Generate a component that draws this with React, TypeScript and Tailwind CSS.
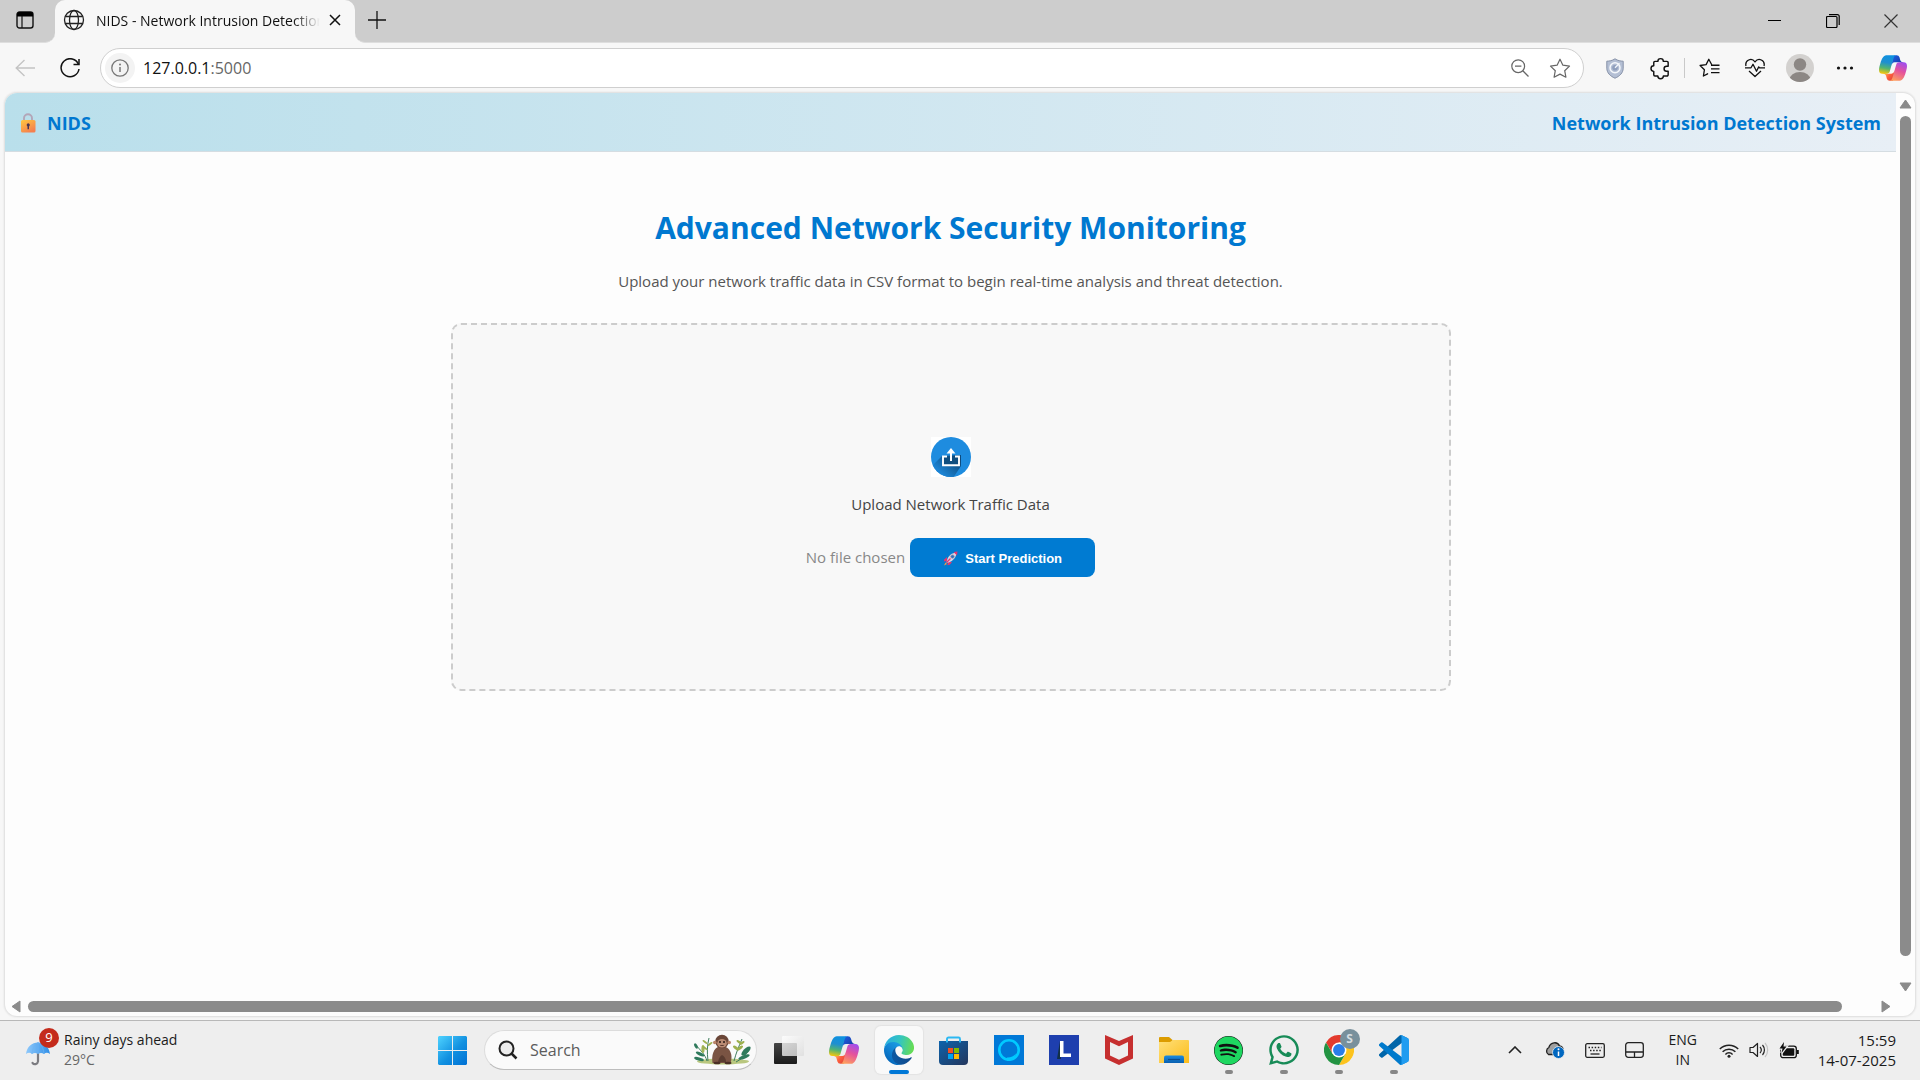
import React, { useState } from "react";
import { FaSpotify, FaWhatsapp } from "react-icons/fa";

function Svg({ w, h, box, children }: { w: number; h: number; box?: string; children: React.ReactNode }) {
  return (
    <svg width={w} height={h} viewBox={box ?? `0 0 ${w} ${h}`} fill="none" aria-hidden="true" className="shrink-0">
      {children}
    </svg>
  );
}

function CopilotLogo({ id, size }: { id: string; size: number }) {
  return (
    <Svg w={size} h={size} box="0 -1 24 24">
      <defs>
        <linearGradient id={id + "a"} x1="12" y1="0" x2="19" y2="6" gradientUnits="userSpaceOnUse">
          <stop stopColor="#1b5fe0" /><stop offset="1" stopColor="#1a3fae" />
        </linearGradient>
        <linearGradient id={id + "b"} x1="5" y1="15" x2="12" y2="21" gradientUnits="userSpaceOnUse">
          <stop stopColor="#ffb657" /><stop offset="0.5" stopColor="#ff5f3d" /><stop offset="1" stopColor="#e0453a" />
        </linearGradient>
        <linearGradient id={id + "c"} x1="8" y1="0" x2="5" y2="16" gradientUnits="userSpaceOnUse">
          <stop stopColor="#0d91e1" /><stop offset="0.4" stopColor="#1f8fd0" /><stop offset="0.7" stopColor="#52b471" /><stop offset="1" stopColor="#f5c70c" />
        </linearGradient>
        <linearGradient id={id + "d"} x1="20" y1="6" x2="13" y2="22" gradientUnits="userSpaceOnUse">
          <stop stopColor="#a04dee" /><stop offset="0.45" stopColor="#e5529c" /><stop offset="1" stopColor="#ffa15c" />
        </linearGradient>
      </defs>
      <path fill={`url(#${id}a)`} d="M17.533 1.829A2.528 2.528 0 0015.11 0h-.737a2.531 2.531 0 00-2.484 2.087l-1.263 6.937.314-1.08a2.528 2.528 0 012.424-1.833h4.284l1.797.706 1.731-.706h-.505a2.528 2.528 0 01-2.423-1.829l-.715-2.453z" />
      <path fill={`url(#${id}b)`} d="M6.726 20.16A2.528 2.528 0 009.152 22h1.566c1.37 0 2.49-1.1 2.525-2.48l.17-6.69-.357 1.228a2.528 2.528 0 01-2.423 1.83h-4.32l-1.54-.842-1.667.843h.497c1.124 0 2.113.75 2.426 1.84l.697 2.432z" />
      <path fill={`url(#${id}c)`} d="M15 0H6.252c-2.5 0-4 3.331-5 6.662-1.184 3.947-2.734 9.225 1.75 9.225H6.78c1.13 0 2.12-.753 2.43-1.847.657-2.317 1.809-6.359 2.713-9.436.46-1.563.842-2.906 1.43-3.742A1.97 1.97 0 0115 0" />
      <path fill={`url(#${id}d)`} d="M9 22h8.749c2.5 0 4-3.332 5-6.663 1.184-3.948 2.734-9.227-1.75-9.227h-3.777c-1.13 0-2.12.754-2.43 1.848-.657 2.318-1.809 6.362-2.713 9.44-.46 1.563-.842 2.907-1.43 3.743A1.97 1.97 0 019 22" />
    </Svg>
  );
}

function IconButton({ label, className, children }: { label: string; className: string; children: React.ReactNode }) {
  return (
    <button type="button" aria-label={label} className={"flex shrink-0 items-center justify-center " + className}>
      {children}
    </button>
  );
}

function TabStrip() {
  return (
    <div className="flex h-[43px] shrink-0 bg-[#f7f7f7]">
      <div className="flex w-[55px] shrink-0 items-start rounded-br-[10px] border-b border-[#dedede] bg-[#cdcdcd]">
        <IconButton label="Tab actions" className="h-10 w-[50px]">
          <Svg w={18} h={18}>
            <rect x="1" y="1" width="16" height="16" rx="2.5" stroke="#111" strokeWidth="1.4" />
            <path d="M1 5.5V3.5A2.5 2.5 0 0 1 3.500 1h11A2.500 2.500 0 0 1 17 3.500v2z" fill="#000" />
            <path d="M6 5v12" stroke="#111" strokeWidth="1.2" />
          </Svg>
        </IconButton>
      </div>
      <div className="w-[300px] shrink-0 bg-[#cdcdcd]">
        <div className="flex h-full items-start rounded-t-[10px] bg-[#f7f7f7]">
          <div className="flex h-10 w-full items-center justify-between pr-2 pl-2">
            <Svg w={22} h={22}>
              <g stroke="#222" strokeWidth="1.3">
                <circle cx="11" cy="11" r="9.500" />
                <ellipse cx="11" cy="11" rx="4.500" ry="9.500" />
                <path d="M2.200 7.500h17.600M2.200 14.500h17.600" />
              </g>
            </Svg>
            <span className="ml-[11px] min-w-0 flex-1 overflow-hidden text-[14px] whitespace-nowrap text-[#111] [mask-image:linear-gradient(to_right,#000_88%,transparent)]">
              NIDS - Network Intrusion Detection System
            </span>
            <IconButton label="Close tab" className="ml-[3px] size-6">
              <Svg w={12} h={12}><path d="M1 1l10 10M11 1L1 11" stroke="#111" strokeWidth="1.500" /></Svg>
            </IconButton>
          </div>
        </div>
      </div>
      <div className="flex flex-1 items-start rounded-bl-[10px] border-b border-[#dedede] bg-[#cdcdcd]">
        <IconButton label="New tab" className="h-10 w-[44px]">
          <Svg w={18} h={18}><path d="M9 0v18M0 9h18" stroke="#111" strokeWidth="1.300" /></Svg>
        </IconButton>
        <div className="ml-auto flex">
          <IconButton label="Minimize" className="h-[42px] w-[58px]">
            <Svg w={14} h={14}><path d="M0 6.500h13" stroke="#000" /></Svg>
          </IconButton>
          <IconButton label="Restore" className="h-[42px] w-[58px]">
            <Svg w={14} h={14}>
              <rect x="0.500" y="2.500" width="10.500" height="11" rx="1" stroke="#000" strokeWidth="1.200" />
              <path d="M3 .6h8.500a1.700 1.700 0 0 1 1.700 1.700V11" stroke="#000" strokeWidth="1.200" />
            </Svg>
          </IconButton>
          <IconButton label="Close" className="h-[42px] w-[58px]">
            <Svg w={14} h={14}><path d="M.5.5l13 13M13.500.5l-13 13" stroke="#333" strokeWidth="1.200" /></Svg>
          </IconButton>
        </div>
      </div>
    </div>
  );
}

function AddressBar() {
  const [url, setUrl] = useState("127.0.0.1:5000");
  return (
    <div className="flex h-[50px] shrink-0 items-center bg-[#f7f7f7] pr-[5px]">
      <IconButton label="Back" className="h-10 w-[50px]">
        <Svg w={20} h={18}><path d="M9.500 1L1.200 9l8.300 8M1.200 9H20" stroke="#c4c4c4" strokeWidth="1.400" /></Svg>
      </IconButton>
      <IconButton label="Refresh" className="h-10 w-10">
        <Svg w={20} h={20}>
          <path d="M18.500 6.500A9 9 0 1 0 19 11" stroke="#111" strokeWidth="1.500" />
          <path d="M19 1v5.500h-5.500" stroke="#111" strokeWidth="1.500" />
        </Svg>
      </IconButton>
      <div className="ml-[10px] flex h-10 flex-1 items-center rounded-full border border-[#cfcfcf] bg-white pr-[3px] pl-1">
        <IconButton label="Site information" className="size-[30px] rounded-full bg-[#f3f3f3]">
          <Svg w={18} h={18}>
            <circle cx="9" cy="9" r="8.200" stroke="#777" strokeWidth="1.300" />
            <path d="M9 8v5" stroke="#777" strokeWidth="1.500" /><circle cx="9" cy="5.500" r="1" fill="#777" />
          </Svg>
        </IconButton>
        <div className="relative ml-2 h-6 flex-1 text-[16px] leading-6">
          <input
            aria-label="Address"
            value={url}
            onChange={(e) => setUrl(e.target.value)}
            className="h-6 w-full bg-transparent text-transparent caret-black outline-none"
          />
          <div aria-hidden="true" className="pointer-events-none absolute inset-0 text-[#111]">
            {url.split(":")[0]}<span className="text-[#666]">{url.includes(":") ? url.slice(url.indexOf(":")) : ""}</span>
          </div>
        </div>
        <IconButton label="Zoom out" className="size-10">
          <Svg w={18} h={18}>
            <circle cx="7.200" cy="7.200" r="6.400" stroke="#666" strokeWidth="1.200" />
            <path d="M4 7.200h6.400M11.800 11.800l5.700 5.700" stroke="#666" strokeWidth="1.300" />
          </Svg>
        </IconButton>
        <IconButton label="Add to favorites" className="size-10">
          <Svg w={22} h={21} box="0 0 22 21">
            <path d="M11 1.200l2.900 6 6.600.9-4.800 4.600 1.200 6.500L11 16.100l-5.900 3.100 1.200-6.500L1.500 8.100l6.600-.9z" stroke="#666" strokeWidth="1.200" strokeLinejoin="round" />
          </Svg>
        </IconButton>
      </div>
      <IconButton label="Tracking shield" className="ml-2 size-[45px]">
        <Svg w={18} h={21}>
          <path d="M9 .8c2.800 1.900 5.500 2.300 8.200 2.400v7c0 4.500-3.400 8-8.200 10-4.800-2-8.200-5.500-8.200-10v-7C3.500 3.100 6.200 2.700 9 .8z" fill="#b4bfd4" stroke="#8792a8" />
          <circle cx="9" cy="9.700" r="5" stroke="#f4f7fb" strokeWidth="1.500" />
          <circle cx="9" cy="9.700" r="2.800" fill="#8f9fbd" /><path d="M9 9.700l4.500-4.500" stroke="#f4f7fb" strokeWidth="1.300" />
        </Svg>
      </IconButton>
      <IconButton label="Extensions" className="size-[45px]">
        <Svg w={24} h={24} box="0 0 20 20">
          <path d="M4.800 8.200V5.500a1 1 0 0 1 1-1h2.400a2.300 2.300 0 0 1 4.600 0h3a1 1 0 0 1 1 1v3h-1.300a2.100 2.100 0 0 0 0 4.200h1.300v3a1 1 0 0 1-1 1h-3a2.300 2.300 0 0 1-4.600 0H5.800a1 1 0 0 1-1-1v-2.900a2.300 2.300 0 0 1 0-4.600z" stroke="#111" strokeWidth="1.200" strokeLinejoin="round" />
        </Svg>
      </IconButton>
      <div className="ml-[2px] h-5 w-px bg-[#c9c9c9]" />
      <IconButton label="Favorites" className="ml-[2px] size-[45px]">
        <Svg w={21} h={20}>
          <path d="M12.600 6.500L9.800 1.200 7.100 6.600l-6 .9 4.300 4.300-1 6.200 4.200-2.200" stroke="#111" strokeWidth="1.300" strokeLinejoin="round" strokeLinecap="round" />
          <path d="M12 7.200h8.500M12 10.900h8.500M12 14.600h8.500" stroke="#111" strokeWidth="1.400" />
        </Svg>
      </IconButton>
      <IconButton label="Browser essentials" className="size-[45px]">
        <Svg w={22} h={20}>
          <path d="M2 8C.6 2.200 7.500-.8 11 3.800 14.500-.8 21.400 2.200 20 8" stroke="#111" strokeWidth="1.300" />
          <path d="M1 9.800h6l2-3.600 3.500 7 2.200-4.300.8.900H21M5 13l6 5.500 6-5.500" stroke="#111" strokeWidth="1.300" strokeLinejoin="round" />
        </Svg>
      </IconButton>
      <IconButton label="Profile" className="size-[45px]">
        <Svg w={28} h={28}>
          <defs><clipPath id="avatar"><circle cx="14" cy="14" r="14" /></clipPath></defs>
          <g clipPath="url(#avatar)">
            <rect width="28" height="28" fill="#d3d1cf" />
            <circle cx="14" cy="10.500" r="6.200" fill="#8c8784" /><ellipse cx="14" cy="26" rx="10.500" ry="8" fill="#8c8784" />
          </g>
        </Svg>
      </IconButton>
      <IconButton label="Settings and more" className="size-[45px]">
        <Svg w={18} h={6}><g fill="#111"><circle cx="2.500" cy="3" r="1.600" /><circle cx="9" cy="3" r="1.600" /><circle cx="15.500" cy="3" r="1.600" /></g></Svg>
      </IconButton>
      <IconButton label="Copilot" className="ml-[3px] size-[45px]"><CopilotLogo id="tb" size={28} /></IconButton>
    </div>
  );
}

function PageHeader() {
  return (
    <header className="flex h-[59px] items-center justify-between border-b border-[#d5dde2] bg-linear-to-r from-[#b9dfeb] to-[#e8eff6] px-[15px] pt-[2px] text-[18px] font-bold text-[#0078d0]">
      <div className="flex items-center gap-[11px]">
        <Svg w={16} h={20}>
          <defs><linearGradient id="lock" x1="0" y1="0" x2="0.600" y2="1"><stop stopColor="#ffc83f" /><stop offset="1" stopColor="#f57f4f" /></linearGradient></defs>
          <path d="M4 9V5.200a4 4 0 0 1 8 0V9" stroke="#b3a6b8" strokeWidth="1.900" />
          <rect x="1" y="7" width="14.500" height="12.500" rx="1.500" fill="url(#lock)" />
          <path d="M8.200 10.200a1.800 1.800 0 0 1 .8 3.300v2.700H7.500v-2.700a1.800 1.800 0 0 1 .7-3.300z" fill="#4a3550" />
        </Svg>
        <span>NIDS</span>
      </div>
      <span>Network Intrusion Detection System</span>
    </header>
  );
}

function UploadPanel() {
  return (
    <form
      onSubmit={(e) => e.preventDefault()}
      className="mt-[30px] flex min-h-[368px] w-full max-w-[1000px] flex-col items-center justify-center rounded-[10px] border-2 border-dashed border-[#cccccc] bg-[#f8f8f8]"
    >
      <label htmlFor="traffic" className="flex cursor-pointer flex-col items-center gap-[15px] text-[15px] leading-6 text-[#444]">
        <span className="bg-white">
          <Svg w={40} h={40}>
            <defs>
              <clipPath id="disc"><circle cx="20" cy="20" r="20" /></clipPath>
              <linearGradient id="shade" x1="24" y1="20" x2="10" y2="36" gradientUnits="userSpaceOnUse"><stop stopColor="#0d4a7c" /><stop offset="1" stopColor="#1c84d4" /></linearGradient>
            </defs>
            <g clipPath="url(#disc)">
              <rect width="40" height="40" fill="#1e8cdf" />
              <path d="M11 19L-4 34l20 16 14-21V18z" fill="url(#shade)" />
            </g>
            <rect x="12.500" y="20" width="15" height="7.500" fill="#104f80" />
            <path d="M16 19.500h-4v8.800h16v-8.800h-4" stroke="#fff" strokeWidth="1.900" />
            <path d="M20 24v-9" stroke="#fff" strokeWidth="2" /><path d="M20 11l4.500 5.500h-9z" fill="#fff" />
          </Svg>
        </span>
        Upload Network Traffic Data
      </label>
      <input id="traffic" type="file" accept=".csv" className="sr-only" />
      <div className="mt-[22px] flex items-center gap-[5px]">
        <span className="text-[15px] text-[#888]">No file chosen</span>
        <button type="submit" className="flex h-[39px] w-[185px] items-center justify-center gap-[7px] rounded-[8px] bg-[#007bd2] pt-[2px] font-['Liberation_Sans',sans-serif] text-[13px] font-bold text-white">
          <Svg w={15} h={15}>
            <path d="M4 6L1.500 8.200l-.7 2.300 3-.4z" fill="#e8336d" /><path d="M9 11l-2.200 2.700-2.300.5.400-3z" fill="#e8336d" />
            <path d="M2.500 11.500L4 13l-3 1.500z" fill="#ff9a3c" />
            <path d="M3.500 11.500c.5-5 4-9 8.500-9.700L13.300 3c-.7 4.500-4.500 8.200-9.500 8.800z" fill="#d8d4e2" />
            <path d="M14.500.5l-.5 4L10.500 1z" fill="#e8336d" /><circle cx="9.500" cy="5.600" r="1.700" fill="#2e6fc0" stroke="#8b84a0" strokeWidth="0.600" />
            <path d="M7.500 7.500l-4 4" stroke="#e8336d" strokeWidth="1.200" />
          </Svg>
          <span>Start Prediction</span>
        </button>
      </div>
    </form>
  );
}

function Viewport() {
  return (
    <div className="flex min-h-0 flex-1 bg-[#f7f7f7] px-[5px] pb-1">
      <div className="flex flex-1 flex-col overflow-hidden rounded-[12px] bg-[#fdfdfd] shadow-[0_0_2px_1px_#dcdcdc]">
        <div className="flex min-h-0 flex-1">
          <div className="min-w-0 flex-1 overflow-hidden">
            <PageHeader />
            <main className="flex flex-col items-center px-4 pt-14">
              <h1 className="text-[30px] leading-10 font-bold text-[#0078d0]">Advanced Network Security Monitoring</h1>
              <p className="mt-[21px] text-[15px] leading-6 text-[#555]">
                Upload your network traffic data in CSV format to begin real-time analysis and threat detection.
              </p>
              <UploadPanel />
            </main>
          </div>
          <div className="flex w-[19px] shrink-0 flex-col items-center pt-[6px] pb-[5px]">
            <Svg w={13} h={10}><path d="M6.500 1L12 9H1z" fill="#8b8b8b" stroke="#8b8b8b" strokeLinejoin="round" /></Svg>
            <div className="mt-[7px] mb-[26px] w-[11px] flex-1 rounded-full bg-[#8b8b8b]" />
            <Svg w={13} h={10}><path d="M6.500 9L12 1H1z" fill="#8b8b8b" stroke="#8b8b8b" strokeLinejoin="round" /></Svg>
          </div>
        </div>
        <div className="flex h-[19px] shrink-0 items-center pr-[24px] pl-[6px]">
          <Svg w={10} h={13}><path d="M1 6.500L9 12V1z" fill="#8b8b8b" stroke="#8b8b8b" strokeLinejoin="round" /></Svg>
          <div className="mr-[39px] ml-[7px] h-[11px] flex-1 rounded-full bg-[#8b8b8b]" />
          <Svg w={10} h={13}><path d="M9 6.500L1 12V1z" fill="#8b8b8b" stroke="#8b8b8b" strokeLinejoin="round" /></Svg>
        </div>
      </div>
    </div>
  );
}

function TaskApp({ label, state, children }: { label: string; state?: "active" | "open"; children: React.ReactNode }) {
  return (
    <button type="button" aria-label={label} className="flex w-[55px] shrink-0 items-center justify-center">
      <span
        className={
          state === "active"
            ? "relative flex size-12 items-center justify-center rounded-[6px] bg-[#f9f9f9] shadow-[0_0_1px_1px_#e3e3e3]"
            : "relative flex size-12 items-center justify-center"
        }
      >
        {children}
        {state === "active" && <span className="absolute bottom-0 h-1 w-5 rounded-full bg-[#0078d7]" />}
        {state === "open" && <span className="absolute bottom-0 h-1 w-2 rounded-full bg-[#868686]" />}
      </span>
    </button>
  );
}

function Monkey() {
  return (
    <Svg w={60} h={32}>
      <ellipse cx="31" cy="27.500" rx="26" ry="3" fill="#b9c77f" />
      <g stroke="#3f7d5c" strokeWidth="1">
        <path d="M15 27C13 20 8 16 3 10M16 27c-1-9-1-15 1-23M42 27c2-8 5-15 8-22M44 28c6-3 9-7 14-13" />
      </g>
      <g fill="#2f7a5c">
        <ellipse cx="4" cy="12" rx="1.500" ry="3" transform="rotate(-30 4 12)" /><ellipse cx="8" cy="20" rx="4.500" ry="1.600" transform="rotate(25 8 20)" />
        <ellipse cx="7" cy="25" rx="5" ry="1.600" transform="rotate(15 7 25)" /><ellipse cx="11" cy="15" rx="1.600" ry="4" fill="#a3b556" />
        <ellipse cx="54" cy="17" rx="6" ry="2.500" transform="rotate(-45 54 17)" /><ellipse cx="52" cy="23" rx="6" ry="1.800" transform="rotate(-20 52 23)" />
      </g>
      <g fill="#9db04e">
        <ellipse cx="47" cy="8" rx="3" ry="1.200" transform="rotate(35 47 8)" /><ellipse cx="50" cy="9" rx="3" ry="1.200" transform="rotate(-35 50 9)" />
        <ellipse cx="44" cy="14" rx="3.500" ry="1.400" transform="rotate(35 44 14)" /><ellipse cx="48" cy="14" rx="3.500" ry="1.400" transform="rotate(-35 48 14)" />
        <ellipse cx="13" cy="8" rx="3" ry="1" transform="rotate(35 13 8)" /><ellipse cx="18" cy="10" rx="3" ry="1" transform="rotate(-35 18 10)" /><ellipse cx="13" cy="14" rx="3" ry="1" transform="rotate(35 13 14)" />
      </g>
      <path d="M20.500 29c-1-6 0-16 8.500-17 10 0 12 10 9.500 17z" fill="#7a5443" />
      <path d="M26 28c1-4 2-6 4-7 2 1 4 3 4 7z" fill="#5a3c30" />
      <circle cx="30" cy="7.500" r="6.800" fill="#6a4638" /><circle cx="22.800" cy="8.500" r="1.800" fill="#b98368" /><circle cx="37.200" cy="8.500" r="1.800" fill="#b98368" />
      <ellipse cx="30" cy="9.200" rx="4.800" ry="4.300" fill="#b98a72" /><circle cx="28" cy="8" r="1" fill="#2a1914" /><circle cx="32" cy="8" r="1" fill="#2a1914" />
      <path d="M28.300 11.500h3.400" stroke="#5c3b30" />
      <ellipse cx="25" cy="29" rx="3.500" ry="1.300" fill="#4a2f26" /><ellipse cx="36" cy="29" rx="3.500" ry="1.300" fill="#4a2f26" />
    </Svg>
  );
}

function Taskbar() {
  return (
    <footer className="flex h-[60px] shrink-0 border-t border-[#b8b8b8] bg-[#eeeeee] pb-px">
      <div className="flex w-[425px] shrink-0 items-center pl-[25px]">
        <div className="relative h-10 w-[39px]">
          <div className="absolute bottom-1 left-0">
            <Svg w={26} h={25}>
              <defs><linearGradient id="umb" x1="0" y1="0" x2="1" y2="0"><stop stopColor="#8fc9fb" /><stop offset="1" stopColor="#2f8fe8" /></linearGradient></defs>
              <path d="M13 11v9.500a3 3 0 0 1-5.500 1.300" stroke="#7b7b80" strokeWidth="2.200" strokeLinecap="round" />
              <path d="M1 13C2 5.500 7 1.500 13 1.500S24 5.500 25 13c-2.200-1.800-4.200-1.800-6 0-1.900-1.500-4-1.500-6 0-2-1.500-4.100-1.500-6 0-1.800-1.800-3.800-1.800-6 0z" fill="url(#umb)" />
              <path d="M13 1.500C9 4 7.500 8 7 13M13 1.500c4 2.500 5.500 6.500 6 11.500M13 1v12" stroke="#6db3f2" strokeWidth="0.700" />
            </Svg>
          </div>
          <span className="absolute -top-[2px] left-[14px] flex size-5 items-center justify-center rounded-full bg-[#c42b1c] text-[13px] text-white">9</span>
        </div>
        <div className="text-[14px] leading-5">
          <div className="text-[#1b1b1b]">Rainy days ahead</div>
          <div className="text-[#666]">29°C</div>
        </div>
      </div>
      <TaskApp label="Start">
        <Svg w={29} h={29}>
          <defs><linearGradient id="win" x1="0" y1="0" x2="29" y2="29" gradientUnits="userSpaceOnUse"><stop stopColor="#4fd3ff" /><stop offset="0.550" stopColor="#1190e0" /><stop offset="1" stopColor="#0070d4" /></linearGradient></defs>
          <path fill="url(#win)" d="M1 0h13v14H0V1zM15 0h13l1 1v13H15zM0 15h14v14H1l-1-1zM15 15h14v13l-1 1H15z" />
        </Svg>
      </TaskApp>
      <div className="mx-[4px] flex h-10 w-[273px] items-center self-center rounded-full border border-[#dcdcdc] border-b-[#bdbdbd] bg-[#fafafa] pr-1 pl-[13px]">
        <Svg w={20} h={20}><circle cx="8.500" cy="8.500" r="7" fill="#ececec" stroke="#222" strokeWidth="2" /><path d="M13.500 13.500L18.500 18.500" stroke="#222" strokeWidth="2.500" /></Svg>
        <input aria-label="Search" placeholder="Search" className="ml-3 w-0 flex-1 bg-transparent text-[16px] outline-none placeholder:text-[#5c5c5c]" />
        <Monkey />
      </div>
      <TaskApp label="Task view">
        <Svg w={30} h={28}>
          <defs>
            <linearGradient id="tv1" x1="0" y1="0" x2="0" y2="1"><stop stopColor="#454545" /><stop offset="1" stopColor="#1b1b1b" /></linearGradient>
            <linearGradient id="tv2" x1="0" y1="0" x2="1" y2="1"><stop stopColor="#fff" stopOpacity="0.800" /><stop offset="1" stopColor="#ddd" stopOpacity="0.800" /></linearGradient>
          </defs>
          <rect x="0" y="7" width="23" height="21" rx="1" fill="url(#tv1)" /><rect x="8" y="0" width="22" height="20" rx="1" fill="url(#tv2)" />
        </Svg>
      </TaskApp>
      <TaskApp label="Copilot"><CopilotLogo id="tk" size={30} /></TaskApp>
      <TaskApp label="Microsoft Edge" state="active">
        <Svg w={30} h={30} box="0 0 256 256">
          <defs>
            <linearGradient id="e1" x1="60" y1="177" x2="240" y2="177" gradientUnits="userSpaceOnUse"><stop stopColor="#0c59a4" /><stop offset="1" stopColor="#114a8b" /></linearGradient>
            <linearGradient id="e2" x1="150" y1="90" x2="40" y2="220" gradientUnits="userSpaceOnUse"><stop stopColor="#1b9de2" /><stop offset="0.500" stopColor="#1284d4" /><stop offset="1" stopColor="#0669bc" /></linearGradient>
            <linearGradient id="e3" x1="20" y1="60" x2="245" y2="110" gradientUnits="userSpaceOnUse"><stop stopColor="#2ab0df" /><stop offset="0.500" stopColor="#35c6bd" /><stop offset="1" stopColor="#66dc55" /></linearGradient>
          </defs>
          <path fill="url(#e1)" d="M231 190.500c-3.400 1.800-6.900 3.400-10.500 4.700-11.500 4.300-23.600 6.500-35.900 6.500-47.300 0-88.500-32.500-88.500-74.300.1-11.400 6.400-21.900 16.400-27.300-42.800 1.800-53.800 46.400-53.800 72.500 0 73.900 68.100 81.400 82.800 81.400 7.900 0 19.800-2.300 27-4.600l1.300-.4c27.600-9.500 51-28.100 66.600-52.800 1.200-1.900.6-4.300-1.200-5.500-1.300-.8-2.900-.9-4.200-.2z" />
          <path fill="url(#e2)" d="M105.700 241.400c-8.900-5.500-16.600-12.800-22.700-21.300-26.300-36-18.400-86.500 17.600-112.800 3.800-2.700 7.700-5.200 11.900-7.200 3.100-1.500 8.400-4.100 15.500-4 10.100.1 19.600 4.900 25.700 13 4 5.400 6.300 11.900 6.400 18.700 0-.2 24.500-79.600-80-79.600-43.900 0-80 41.700-80 78.200-.2 19.300 4 38.500 12.100 56 27.600 58.800 94.800 87.600 156.400 67.100-21.100 6.600-44.100 3.700-62.900-8.100z" />
          <path fill="url(#e3)" d="M152.300 148.900c-.9 1-3.400 2.500-3.400 5.600 0 2.600 1.700 5.200 4.800 7.300 14.400 10.100 41.700 8.700 41.800 8.700 10.700 0 21.300-2.900 30.500-8.300 18.800-11 30.400-31.100 30.400-52.900.3-22.400-8-37.300-11.300-43.900C223.900 23.900 177.700 0 128 0 58 0 1 56.200 0 126.200.5 89.700 36.800 60.200 80 60.200c3.500 0 23.500.3 42 10.100 16.300 8.600 24.900 18.900 30.800 29.200 6.200 10.700 7.300 24.100 7.300 29.500 0 5.300-2.700 13.300-7.800 19.900z" />
        </Svg>
      </TaskApp>
      <TaskApp label="Microsoft Store">
        <Svg w={29} h={29}>
          <defs><linearGradient id="st" x1="0" y1="0" x2="1" y2="1"><stop stopColor="#0d63ac" /><stop offset="1" stopColor="#24365c" /></linearGradient></defs>
          <path d="M0 5h29v20a4 4 0 0 1-4 4H4a4 4 0 0 1-4-4z" fill="url(#st)" />
          <path d="M8 6.500V3a1.500 1.500 0 0 1 1.500-1.500h10A1.500 1.500 0 0 1 21 3v3.500" stroke="#2cb8f2" strokeWidth="1.900" />
          <rect x="9" y="12" width="5" height="5" fill="#f25022" /><rect x="15" y="12" width="5" height="5" fill="#7fba00" /><rect x="9" y="18" width="5" height="5" fill="#00a4ef" /><rect x="15" y="18" width="5" height="5" fill="#ffb900" />
        </Svg>
      </TaskApp>
      <TaskApp label="Alexa">
        <Svg w={30} h={30}><rect width="30" height="30" fill="#0078d7" /><circle cx="15" cy="15" r="9.700" stroke="#00caff" strokeWidth="2.600" /><path d="M13 26v-3.500c3 .3 7-1 9-4-1 5-4.500 7.500-9 7.500z" fill="#00caff" /></Svg>
      </TaskApp>
      <TaskApp label="Lenovo Vantage">
        <Svg w={30} h={30}><rect width="30" height="30" fill="#1e3fae" /><path d="M11 6l-3 18h4z" fill="#123048" /><path d="M11 6h3.500v12.500H22V22H11z" fill="#fff" /></Svg>
      </TaskApp>
      <TaskApp label="McAfee">
        <Svg w={28} h={30}><path d="M0 0l14 6L28 0v23.500L14 30 0 23.500zM5 7v13.500l9 4.200 9-4.200V7l-9 4.200z" fill="#c62f2f" fillRule="evenodd" /></Svg>
      </TaskApp>
      <TaskApp label="File Explorer">
        <Svg w={30} h={27}>
          <defs><linearGradient id="fo" x1="0" y1="0" x2="1" y2="1"><stop stopColor="#ffe07a" /><stop offset="1" stopColor="#fcbc19" /></linearGradient><linearGradient id="fb" x1="0" y1="0" x2="0" y2="1"><stop stopColor="#1b8be0" /><stop offset="1" stopColor="#0a60b0" /></linearGradient></defs>
          <path d="M0 1a1 1 0 0 1 1-1h9l3.500 3v4H0z" fill="#dc9c00" /><path d="M0 5h11l3-2h15a1 1 0 0 1 1 1v22H0z" fill="url(#fo)" />
          <path d="M5 26v-5.500a2 2 0 0 1 2-2h16a2 2 0 0 1 2 2V26z" fill="url(#fb)" /><path d="M9 22.500h12" stroke="#0b4c8c" strokeWidth="1.200" />
        </Svg>
      </TaskApp>
      <TaskApp label="Spotify" state="open"><span className="rounded-full bg-[#111]"><FaSpotify className="size-[29px] text-[#1ed760]" /></span></TaskApp>
      <TaskApp label="WhatsApp" state="open"><FaWhatsapp className="size-[34px] text-[#178b57]" /></TaskApp>
      <TaskApp label="Google Chrome" state="open">
        <Svg w={30} h={30} box="0 0 48 48">
          <circle cx="24" cy="24" r="24" fill="#fff" />
          <path d="M24 12h20.800A24 24 0 0 0 3.200 12l10.400 18z" fill="#e33b2e" /><path d="M34.400 30L24 48A24 24 0 0 0 44.800 12H24z" fill="#fcc31e" /><path d="M13.600 30L3.200 12A24 24 0 0 0 24 48l10.400-18z" fill="#229342" />
          <circle cx="24" cy="24" r="12" fill="#fff" /><circle cx="24" cy="24" r="9.500" fill="#2a7de9" />
        </Svg>
        <span className="absolute top-[3px] right-[3px] flex size-5 items-center justify-center rounded-full bg-[#78909c] text-[12px] font-bold text-[#d5dde1]">S</span>
      </TaskApp>
      <TaskApp label="Visual Studio Code" state="open">
        <Svg w={30} h={30} box="0 0 100 100">
          <path fill="#0065a9" d="M96.461 10.796L75.857.876A6.230 6.230 0 0 0 68.750 2.083L1.299 63.583a4.167 4.167 0 0 0 .004 6.162l5.510 5.009a4.170 4.170 0 0 0 5.321.237L93.361 13.370C96.086 11.303 100 13.246 100 16.667v-.239c0-2.401-1.375-4.590-3.539-5.632z" />
          <path fill="#007acc" d="M96.461 89.204l-20.604 9.921a6.230 6.230 0 0 1-7.107-1.208L1.299 36.417a4.167 4.167 0 0 1 .004-6.162l5.510-5.009a4.170 4.170 0 0 1 5.321-.237l81.227 61.621C96.086 88.697 100 86.754 100 83.333v.24c0 2.401-1.375 4.590-3.539 5.631z" />
          <path fill="#1f9cf0" d="M75.858 99.126a6.230 6.230 0 0 1-7.108-1.209C71.056 100.223 75 98.590 75 95.328V4.672C75 1.410 71.056-.223 68.750 2.083A6.230 6.230 0 0 1 75.858.874l20.601 9.907A6.250 6.250 0 0 1 100 16.413v67.174a6.250 6.250 0 0 1-3.541 5.633z" />
        </Svg>
      </TaskApp>
      <div className="ml-auto flex items-center pr-6 text-[14px] leading-5 text-[#1b1b1b]">
        <IconButton label="Show hidden icons" className="h-10 w-10"><Svg w={14} h={8}><path d="M1 7l6-6 6 6" stroke="#222" strokeWidth="1.600" /></Svg></IconButton>
        <IconButton label="OneDrive" className="h-10 w-10">
          <Svg w={21} h={18}><path d="M4.500 13.500a4 4 0 0 1 .3-7C6.500 1 13.500 0 15.500 5c2 .3 3.500 1.800 3.500 4 0 3-2 4.500-4.500 4.500z" fill="#a0a0a0" stroke="#222" strokeWidth="1.300" /><circle cx="14.500" cy="11.500" r="6" fill="#0067c0" stroke="#eee" strokeWidth="0.800" /><path d="M14.500 10.500V15" stroke="#fff" strokeWidth="1.500" /><circle cx="14.500" cy="8.300" r="1" fill="#fff" /></Svg>
        </IconButton>
        <IconButton label="Touch keyboard" className="h-10 w-10">
          <Svg w={20} h={15}><rect x=".7" y=".7" width="18.600" height="13.600" rx="1.500" stroke="#222" strokeWidth="1.300" /><path d="M3.500 4.500h13M5 7.500h11" stroke="#222" strokeWidth="1.500" strokeDasharray="1.500 1.600" /><path d="M5.500 11h9" stroke="#222" strokeWidth="1.300" /></Svg>
        </IconButton>
        <IconButton label="Touchpad" className="h-10 w-10">
          <Svg w={19} h={16}><rect x=".7" y=".7" width="17.600" height="14.600" rx="2.500" stroke="#222" strokeWidth="1.300" /><path d="M1 10h17M9.500 10v5" stroke="#222" strokeWidth="1.300" /></Svg>
        </IconButton>
        <button type="button" className="w-14 text-center">ENG<br />IN</button>
        <button type="button" aria-label="Network, volume and battery" className="ml-2 flex items-center gap-[10px]">
          <Svg w={20} h={15}><g stroke="#222" strokeWidth="1.500"><path d="M.8 6a13 13 0 0 1 18.400 0M3.600 8.800a9 9 0 0 1 12.800 0M6.400 11.400a5 5 0 0 1 7.200 0" /></g><circle cx="10" cy="13.300" r="1.500" fill="#222" /></Svg>
          <Svg w={20} h={16}><path d="M1 5.500h3L8.500 1.500v13L4 10.500H1z" stroke="#222" strokeWidth="1.200" strokeLinejoin="round" /><path d="M11 5a4.500 4.500 0 0 1 0 6M13.500 3a7.500 7.500 0 0 1 0 10" stroke="#222" strokeWidth="1.200" /><path d="M16 1a10.500 10.500 0 0 1 0 14" stroke="#c4c4c4" strokeWidth="1.200" /></Svg>
          <Svg w={21} h={17}>
            <rect x="1.700" y="4.200" width="15.600" height="11.500" rx="2.500" stroke="#111" strokeWidth="1.300" />
            <rect x="3.700" y="6.200" width="11.600" height="7.500" rx="1" fill="#111" />
            <path d="M18 8h1.800v4H18z" fill="#111" />
            <path d="M5 0L.5 6.500h3L2.500 11 7.500 4.500h-3z" fill="#111" stroke="#eee" strokeWidth="2.500" style={{ paintOrder: "stroke" }} />
          </Svg>
        </button>
        <button type="button" className="ml-[18px] text-right text-[15px]">15:59<br />14-07-2025</button>
      </div>
    </footer>
  );
}

export default function App() {
  return (
    <div className="flex h-screen flex-col overflow-hidden bg-[#f7f7f7] font-['Open_Sans','Noto_Sans',sans-serif]">
      <TabStrip />
      <AddressBar />
      <Viewport />
      <Taskbar />
    </div>
  );
}
